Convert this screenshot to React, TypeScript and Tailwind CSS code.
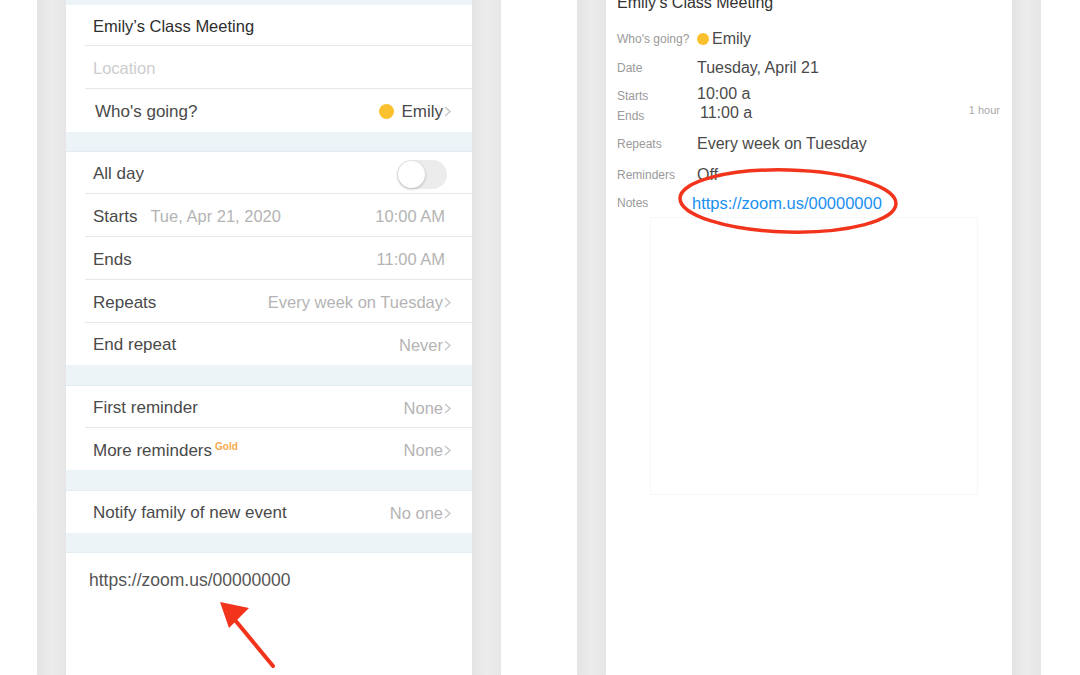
import React from "react";

const font = { fontFamily: '"Liberation Sans", Arial, sans-serif' };

const Chevron = () => (
  <svg width="7" height="11" viewBox="0 0 7 11" className="ml-[1px]">
    <polyline points="1,1 6,5.5 1,10" fill="none" stroke="#c4c4c4" strokeWidth="1.3" />
  </svg>
);

const Row = ({ h, children, divider = true }: any) => (
  <div className={`relative flex items-center bg-white pl-[27px] pr-[21px] pt-[2px] ${h}`}>
    {children}
    {divider && <div className="absolute bottom-0 left-[19px] right-0 h-px bg-[#e8e8e8]" />}
  </div>
);

const Gap = ({ h }: { h: string }) => <div className={`${h} bg-[#edf4f7] border-b border-[#e3ecf0]`} />;

const Bezel = () => <div className="w-[29px] h-full bg-gradient-to-r from-[#e4e4e4] via-[#ececec] to-[#e6e6e6]" />;

function EditScreen() {
  return (
    <div className="relative w-[406px] h-full bg-white flex flex-col text-[17px] text-[#4a4a4a]">
      <div className="h-[5px] bg-[#edf4f7]" />
      <Row h="h-[41px]">
        <span className="text-[16.5px] text-[#2e2e2e]">Emily’s Class Meeting</span>
      </Row>
      <Row h="h-[43px]">
        <span className="text-[16.5px] text-[#cdcdcd]">Location</span>
      </Row>
      <Row h="h-[43px]" divider={false}>
        <span className="ml-[2px] text-[#4a4a4a]">Who's going?</span>
        <span className="ml-auto flex items-center">
          <span className="w-[15px] h-[15px] rounded-full bg-[#fbc02d] mr-[7px]" />
          <span>Emily</span>
          <Chevron />
        </span>
      </Row>
      <Gap h="h-[20px]" />
      <Row h="h-[42px]">
        <span>All day</span>
        <span className="ml-auto mr-[4px] w-[50px] h-[29px] rounded-full bg-[#ececec] relative">
          <span className="absolute left-[1px] top-[1px] w-[27px] h-[27px] rounded-full bg-white shadow-[0_1px_3px_rgba(0,0,0,0.25)]" />
        </span>
      </Row>
      <Row h="h-[43px]">
        <span>Starts</span>
        <span className="ml-[13px] text-[16.5px] text-[#b4b4b4]">Tue, Apr 21, 2020</span>
        <span className="ml-auto mr-[6px] text-[16.5px] text-[#b4b4b4]">10:00 AM</span>
      </Row>
      <Row h="h-[43px]">
        <span>Ends</span>
        <span className="ml-auto mr-[6px] text-[16.5px] text-[#b4b4b4]">11:00 AM</span>
      </Row>
      <Row h="h-[43px]">
        <span>Repeats</span>
        <span className="ml-auto flex items-center text-[16.5px] text-[#b4b4b4]">
          Every week on Tuesday
          <Chevron />
        </span>
      </Row>
      <Row h="h-[42px]" divider={false}>
        <span>End repeat</span>
        <span className="ml-auto flex items-center text-[16.5px] text-[#b4b4b4]">
          Never
          <Chevron />
        </span>
      </Row>
      <Gap h="h-[21px]" />
      <Row h="h-[42px]">
        <span>First reminder</span>
        <span className="ml-auto flex items-center text-[16.5px] text-[#b4b4b4]">
          None
          <Chevron />
        </span>
      </Row>
      <Row h="h-[42px]" divider={false}>
        <span className="mt-[2px]">
          More reminders
          <sup className="ml-[3px] text-[10px] font-bold text-[#f7a94b] relative top-[-6px]">Gold</sup>
        </span>
        <span className="ml-auto flex items-center text-[16.5px] text-[#b4b4b4]">
          None
          <Chevron />
        </span>
      </Row>
      <Gap h="h-[21px]" />
      <Row h="h-[42px]" divider={false}>
        <span>Notify family of new event</span>
        <span className="ml-auto flex items-center text-[16.5px] text-[#b4b4b4]">
          No one
          <Chevron />
        </span>
      </Row>
      <Gap h="h-[20px]" />
      <div className="flex-1 bg-white pl-[23px] pt-[14px]">
        <span className="text-[17.5px] text-[#555]">https://zoom.us/00000000</span>
      </div>
      {/* annotation arrow */}
      <svg className="absolute left-[140px] top-[590px]" width="100" height="85" viewBox="0 0 100 85">
        <line x1="67" y1="76" x2="24" y2="24" stroke="#f2341c" strokeWidth="4" strokeLinecap="round" />
        <polygon points="14,12 43,18 23,38" fill="#f2341c" />
      </svg>
    </div>
  );
}

const Detail = ({ label, children, h = "h-[29px]", top = "" }: any) => (
  <div className={`flex items-center ${h} ${top}`}>
    <span className="w-[80px] shrink-0 text-[12px] text-[#9a9a9a]">{label}</span>
    <div className="flex-1 flex items-center text-[16px] text-[#4a4a4a]">{children}</div>
  </div>
);

function DetailScreen() {
  return (
    <div className="relative w-[406px] h-full bg-white flex flex-col pl-[11px] pr-[12px]">
      <div className="mt-[-8px] h-[22px] flex items-center text-[16px] font-medium text-[#333]">
        Emily’s Class Meeting
      </div>
      <Detail label="Who's going?" h="h-[32px]" top="mt-[9px]">
        <span className="w-[12px] h-[12px] rounded-full bg-[#fbc02d] mr-[3px]" />
        Emily
      </Detail>
      <Detail label="Date" h="h-[26px]">Tuesday, April 21</Detail>
      <div className="flex h-[40px]">
        <div className="w-[80px] shrink-0 flex flex-col text-[12px] text-[#9a9a9a] pt-[5px] leading-[20px]">
          <span>Starts</span>
          <span>Ends</span>
        </div>
        <div className="flex-1 flex flex-col text-[16px] text-[#4a4a4a] leading-[19px] pt-[3px]">
          <span>10:00 a</span>
          <span className="ml-[3px] flex">
            11:00 a
            <span className="ml-auto text-[11px] text-[#a8a8a8] mt-[-2px]">1 hour</span>
          </span>
        </div>
      </div>
      <Detail label="Repeats" h="h-[28px]" top="mt-[9px]">Every week on Tuesday</Detail>
      <Detail label="Reminders" h="h-[30px]" top="mt-[2px]">Off</Detail>
      <Detail label="Notes" h="h-[26px]">
        <span className="ml-[-5px] text-[16.5px] text-[#1a90f0]">https://zoom.us/00000000</span>
      </Detail>
      <div className="ml-[33px] mr-[22px] mt-[1px] h-[278px] border border-[#f7f7f7]" />
      {/* annotation ellipse */}
      <svg className="absolute left-[68px] top-[160px]" width="230" height="80" viewBox="0 0 230 80">
        <ellipse cx="114" cy="41" rx="108" ry="31" fill="none" stroke="#f2341c" strokeWidth="3.5" transform="rotate(1.5 114 41)" />
      </svg>
    </div>
  );
}

export default function App() {
  return (
    <div className="w-[1080px] h-[675px] bg-white flex overflow-hidden" style={font}>
      <div className="w-[37px] shrink-0" />
      <div className="flex h-full">
        <Bezel />
        <EditScreen />
        <Bezel />
      </div>
      <div className="w-[76px] shrink-0" />
      <div className="flex h-full">
        <Bezel />
        <DetailScreen />
        <Bezel />
      </div>
    </div>
  );
}
